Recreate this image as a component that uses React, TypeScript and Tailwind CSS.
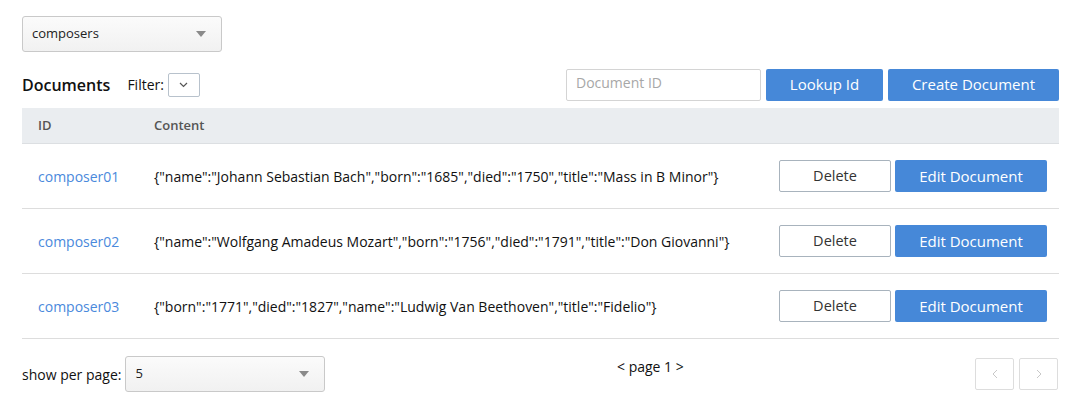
import React from 'react';

const rows = [
  {
    id: 'composer01',
    content: '{"name":"Johann Sebastian Bach","born":"1685","died":"1750","title":"Mass in B Minor"}',
  },
  {
    id: 'composer02',
    content: '{"name":"Wolfgang Amadeus Mozart","born":"1756","died":"1791","title":"Don Giovanni"}',
  },
  {
    id: 'composer03',
    content: '{"born":"1771","died":"1827","name":"Ludwig Van Beethoven","title":"Fidelio"}',
  },
];

const Caret = () => (
  <svg width="10" height="6" viewBox="0 0 10 6" className="shrink-0">
    <path d="M0 0 L10 0 L5 6 Z" fill="#8a8a8a" />
  </svg>
);

const SelectBox = ({ value, className = '' }: { value: string; className?: string }) => (
  <div
    className={`flex items-center justify-between h-[36px] pl-[9px] pr-[15px] border border-[#c9c9c9] rounded-[3px] bg-gradient-to-b from-[#fbfbfb] to-[#f1f1f1] text-[13px] text-[#222] ${className}`}
  >
    <span>{value}</span>
    <Caret />
  </div>
);

export default function App() {
  return (
    <div
      className="w-[1079px] h-[411px] bg-white pl-[22px] pr-[20px] pt-[16px] text-[#222]"
      style={{ fontFamily: '"Open Sans", "Liberation Sans", sans-serif' }}
    >
      <SelectBox value="composers" className="w-[200px]" />

      <div className="flex items-center justify-between mt-[16px] h-[33px]">
        <div className="flex items-center">
          <span className="text-[16px] font-semibold text-[#111]">Documents</span>
          <span className="ml-[17px] text-[14px] text-[#111]">Filter:</span>
          <div className="ml-[4px] w-[32px] h-[24px] border border-[#b8c2cc] rounded-[2px] flex items-center justify-center">
            <svg width="9" height="6" viewBox="0 0 9 6">
              <path d="M1 1 L4.5 4.5 L8 1" fill="none" stroke="#555" strokeWidth="1.2" />
            </svg>
          </div>
        </div>
        <div className="flex items-center gap-[5px]">
          <div className="w-[195px] h-[32px] border border-[#d4d4d4] rounded-[2px] px-[9px] pb-[4px] flex items-center text-[14px] text-[#a7a7a7]">
            Document ID
          </div>
          <button className="w-[117px] h-[32px] bg-[#4688d8] text-white text-[15px] rounded-[2px]">
            Lookup Id
          </button>
          <button className="w-[171px] h-[32px] bg-[#4688d8] text-white text-[15px] rounded-[2px]">
            Create Document
          </button>
        </div>
      </div>

      <div className="mt-[7px]">
        <div className="flex items-center h-[36px] bg-[#eaedf0] border-b border-[#dcdfe2] text-[13px] font-semibold text-[#555]">
          <div className="w-[132px] pl-[16px]">ID</div>
          <div>Content</div>
        </div>
        {rows.map((r) => (
          <div key={r.id} className="flex items-center h-[65px] border-b border-[#dddddd] text-[14px]">
            <div className="w-[132px] pl-[16px] text-[#4a89dc]">{r.id}</div>
            <div className="flex-1 text-[#111]">{r.content}</div>
            <div className="flex items-center gap-[4px] pr-[12px]">
              <button className="w-[112px] h-[32px] border border-[#a8b3bd] rounded-[2px] bg-white text-[14.5px] text-[#333]">
                Delete
              </button>
              <button className="w-[152px] h-[32px] bg-[#4688d8] text-white text-[15px] rounded-[2px]">
                Edit Document
              </button>
            </div>
          </div>
        ))}
      </div>

      <div className="flex items-start mt-[17px]">
        <div className="flex items-center w-[560px]">
          <span className="text-[14px] text-[#111] mr-[4px]">show per page:</span>
          <SelectBox value="5" className="w-[200px]" />
        </div>
        <div className="text-[14px] text-[#111] pl-[35px]">&lt; page 1 &gt;</div>
        <div className="ml-auto flex gap-[5px] mt-[2px] mr-[1px]">
          <div className="w-[39px] h-[32px] border border-[#dddddd] rounded-[2px] flex items-center justify-center">
            <svg width="6" height="10" viewBox="0 0 6 10">
              <path d="M5 1 L1 5 L5 9" fill="none" stroke="#c8c8c8" strokeWidth="1" />
            </svg>
          </div>
          <div className="w-[39px] h-[32px] border border-[#dddddd] rounded-[2px] flex items-center justify-center">
            <svg width="6" height="10" viewBox="0 0 6 10">
              <path d="M1 1 L5 5 L1 9" fill="none" stroke="#c8c8c8" strokeWidth="1" />
            </svg>
          </div>
        </div>
      </div>
    </div>
  );
}
